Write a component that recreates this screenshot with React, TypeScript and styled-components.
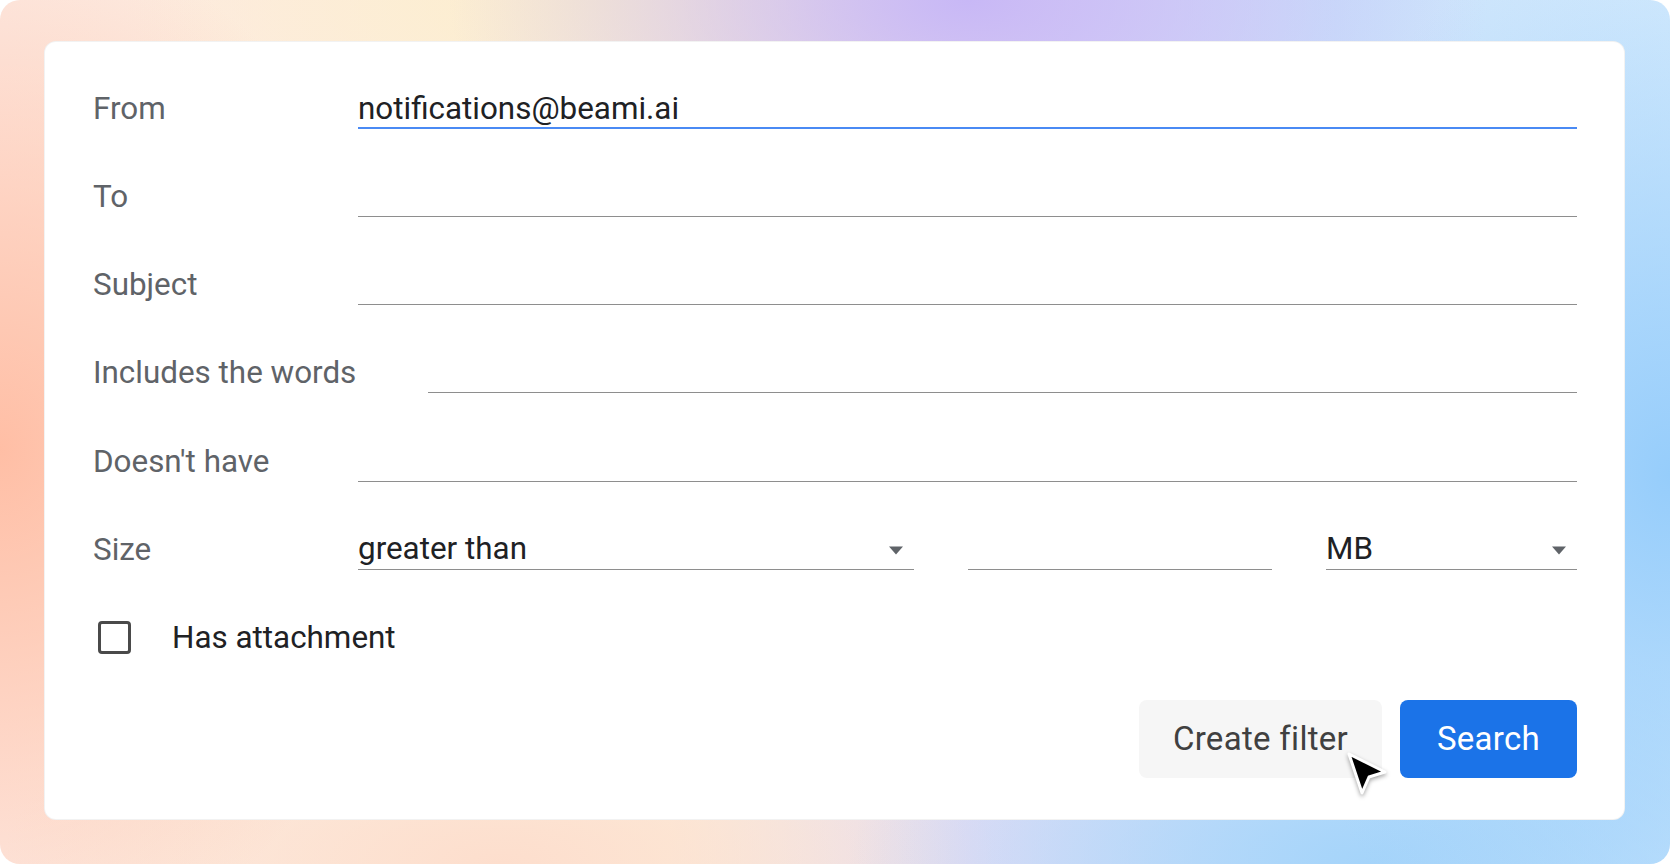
import React from "react";
import styled, { createGlobalStyle } from "styled-components";

const GlobalStyle = createGlobalStyle`
  * { box-sizing: border-box; }
  html, body { margin: 0; padding: 0; background: #ffffff; }
  body { font-family: Roboto, "Liberation Sans", Arial, sans-serif; }
`;

const Frame = styled.div`
  width: 1670px;
  height: 864px;
  border-radius: 20px;
  overflow: hidden;
  padding: 41px 45px 0 44px;
  background:
    radial-gradient(ellipse 420px 520px at 0% 52%, rgba(255, 188, 162, 0.95) 0%, rgba(255, 188, 162, 0) 100%),
    radial-gradient(ellipse 520px 260px at 58% 0%, rgba(200, 184, 246, 1) 0%, rgba(200, 184, 246, 0) 100%),
    radial-gradient(ellipse 420px 560px at 100% 55%, rgba(150, 205, 251, 1) 0%, rgba(150, 205, 251, 0) 100%),
    radial-gradient(ellipse 520px 240px at 82% 100%, rgba(165, 212, 250, 1) 0%, rgba(165, 212, 250, 0) 100%),
    radial-gradient(ellipse 480px 200px at 36% 0%, rgba(252, 238, 205, 1) 0%, rgba(252, 238, 205, 0) 100%),
    radial-gradient(ellipse 500px 200px at 30% 100%, rgba(253, 222, 205, 1) 0%, rgba(253, 222, 205, 0) 100%),
    linear-gradient(90deg, #fde9e1 0%, #fcefdc 40%, #e4dcf4 58%, #c9e2fb 80%, #d6ebfd 100%);
`;

const Card = styled.div`
  position: relative;
  width: 1581px;
  background: #ffffff;
  border-radius: 12px;
  border: 1px solid rgba(0, 0, 0, 0.05);
  padding: 44.5px 47px 41px 48px;
  display: flex;
  flex-direction: column;
`;

const Fields = styled.div`
  display: flex;
  flex-direction: column;
  gap: 46.3px;
`;

const Row = styled.div`
  display: flex;
  align-items: flex-start;
`;

const Label = styled.div`
  flex: 0 0 auto;
  min-width: 193px;
  margin-right: 72px;
  padding-top: 2px;
  height: 42px;
  font-size: 31.4px;
  line-height: 40px;
  color: #5f6368;
  white-space: nowrap;
`;

const Input = styled.div<{ $focused?: boolean }>`
  flex: 1 1 auto;
  height: 42px;
  padding-top: 2px;
  font-size: 31.4px;
  line-height: 40px;
  color: #202124;
  border-bottom: ${(p) => (p.$focused ? "2px solid #4a8af4" : "1.5px solid #8e8e8e")};
  white-space: nowrap;
`;

const SizeControls = styled.div`
  flex: 1 1 auto;
  display: flex;
  gap: 54px;
`;

const Select = styled.div<{ $width?: number }>`
  ${(p) => (p.$width ? `flex: 0 0 ${p.$width}px;` : "flex: 1 1 auto;")}
  height: 42px;
  padding: 2px 10px 0 0;
  display: flex;
  align-items: center;
  justify-content: space-between;
  font-size: 31.4px;
  line-height: 40px;
  color: #202124;
  border-bottom: 1.5px solid #8e8e8e;
`;

const NumberBox = styled.div`
  flex: 0 0 304px;
  height: 42px;
  border-bottom: 1.5px solid #8e8e8e;
`;

const Caret = styled.svg`
  width: 16px;
  height: 9px;
  flex: 0 0 auto;
  margin-top: 2px;
`;

const CheckRow = styled.div`
  display: flex;
  align-items: center;
  margin-top: 48px;
  padding-left: 5px;
  gap: 41px;
`;

const CheckBox = styled.div`
  width: 33px;
  height: 33px;
  border: 3px solid #4a4a4a;
  border-radius: 4px;
`;

const CheckLabel = styled.div`
  font-size: 31.4px;
  line-height: 40px;
  color: #202124;
`;

const Actions = styled.div`
  display: flex;
  justify-content: flex-end;
  gap: 18px;
  margin-top: 42px;
`;

const Button = styled.div<{ $primary?: boolean; $width: number }>`
  position: relative;
  width: ${(p) => p.$width}px;
  height: 78px;
  border-radius: 8px;
  display: flex;
  align-items: center;
  justify-content: center;
  font-size: 33px;
  font-weight: 400;
  letter-spacing: 0.3px;
  background: ${(p) => (p.$primary ? "#1b73e8" : "#f6f6f6")};
  color: ${(p) => (p.$primary ? "#ffffff" : "#404040")};
`;

const Cursor = styled.svg`
  position: absolute;
  left: 206px;
  top: 50px;
  width: 44px;
  height: 48px;
  overflow: visible;
  filter: drop-shadow(0 2px 2px rgba(0, 0, 0, 0.35));
`;

const CaretIcon = () => (
  <Caret viewBox="0 0 16 9">
    <path d="M1 0.5 L15 0.5 L8 8.5 Z" fill="#5f6368" />
  </Caret>
);

export default function App() {
  return (
    <>
      <GlobalStyle />
      <Frame>
        <Card>
          <Fields>
            <Row>
              <Label>From</Label>
              <Input $focused>notifications@beami.ai</Input>
            </Row>
            <Row>
              <Label>To</Label>
              <Input />
            </Row>
            <Row>
              <Label>Subject</Label>
              <Input />
            </Row>
            <Row>
              <Label>Includes the words</Label>
              <Input />
            </Row>
            <Row>
              <Label>Doesn't have</Label>
              <Input />
            </Row>
            <Row>
              <Label>Size</Label>
              <SizeControls>
                <Select $width={556}>
                  <span>greater than</span>
                  <CaretIcon />
                </Select>
                <NumberBox />
                <Select>
                  <span>MB</span>
                  <CaretIcon />
                </Select>
              </SizeControls>
            </Row>
          </Fields>
          <CheckRow>
            <CheckBox />
            <CheckLabel>Has attachment</CheckLabel>
          </CheckRow>
          <Actions>
            <Button $width={243}>
              Create filter
              <Cursor viewBox="0 0 44 48">
                <path
                  d="M4 4 L40 22 L24 27 L17 43 Z"
                  fill="#000000"
                  stroke="#ffffff"
                  strokeWidth="3"
                  strokeLinejoin="round"
                />
              </Cursor>
            </Button>
            <Button $primary $width={177}>
              Search
            </Button>
          </Actions>
        </Card>
      </Frame>
    </>
  );
}
